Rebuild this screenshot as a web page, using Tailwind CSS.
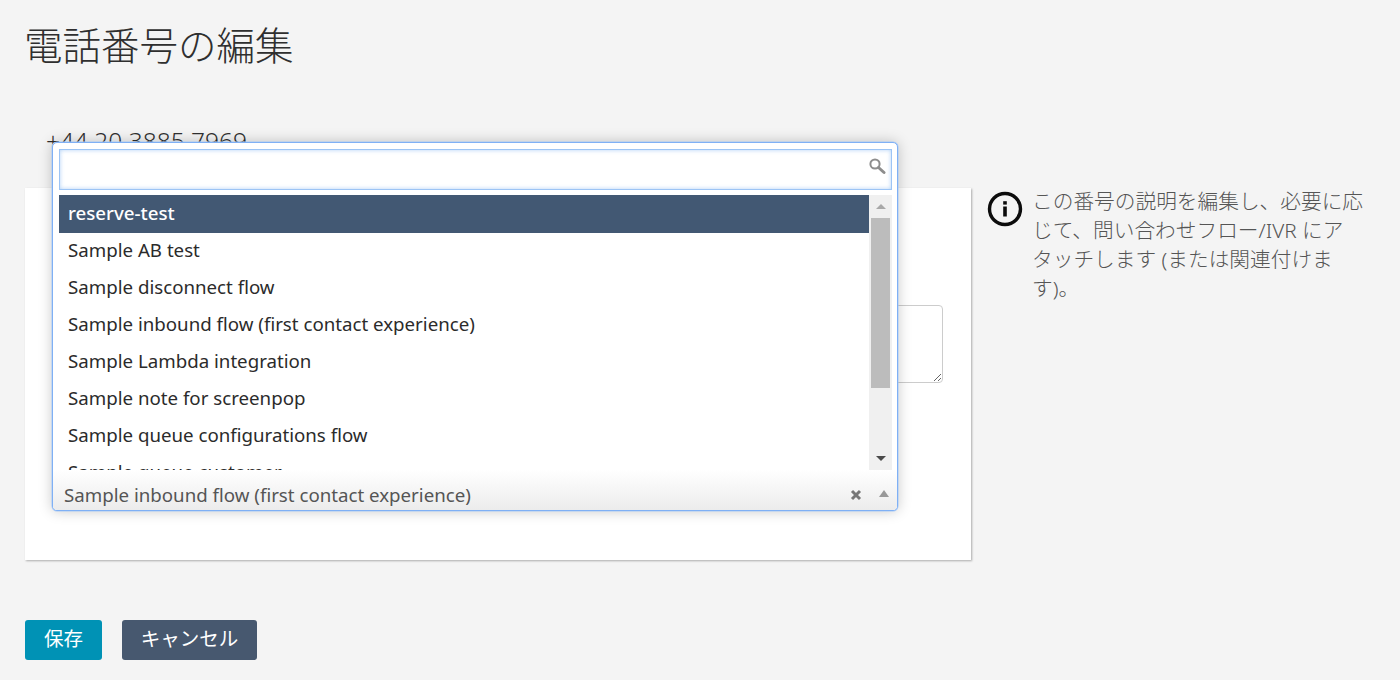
<!DOCTYPE html>
<html lang="ja">

<head>
    <meta charset="UTF-8">
    <title>電話番号の編集</title>
    <script src="https://cdn.jsdelivr.net/npm/@tailwindcss/browser@4"></script>
</head>

<body class="bg-[#f4f4f4] text-[#333] h-[680px] overflow-hidden font-['Noto_Sans','Noto_Sans_CJK_JP',sans-serif]">

    <div class="px-[25px]">
        <h1 class="pt-[18px] -ml-[1px] h-[112px] text-[38.5px] leading-[54px] font-light text-[#2f2f2f]">電話番号の編集</h1>

        <div class="h-[76px] pl-[21px] pt-[13px] text-[24.5px] leading-[32px] text-[#2f2f2f] font-light">+44 20 3885 7969</div>

        <div class="flex items-start">
            <!-- Card -->
            <div class="relative w-[946px] h-[372px] bg-white shadow-[1px_1px_2px_rgba(0,0,0,0.3)]">
                <textarea class="absolute left-[600px] top-[117px] w-[318px] h-[78px] border border-[#ccc] rounded-[4px] bg-white"></textarea>

                <!-- Dropdown -->
                <div class="absolute left-[27px] top-[-46px] w-[846px] h-[369px] bg-white border border-[#7fb0f5] rounded-[5px] shadow-[0_0_0_0.5px_#a9cbf8,0_0_14px_rgba(0,0,0,0.22)] flex flex-col pl-[6px] pr-[5px] pt-[6px]">
                    <div class="relative shrink-0 h-[41px] border border-[#9cc4f5] bg-white shadow-[inset_0_0_4px_rgba(110,170,240,0.55)]">
                        <svg class="absolute right-[5px] top-[7px] w-[18px] h-[18px]" viewBox="0 0 18 18" fill="none" stroke="#8d8d8d">
                            <circle cx="7" cy="7" r="4.6" stroke-width="2" />
                            <path d="M10.5 10.5L16 15.5" stroke-width="3" stroke-linecap="round" />
                        </svg>
                    </div>

                    <div class="flex mt-[5px] h-[275px] shrink-0 overflow-hidden">
                        <ul class="flex-1 text-[18.7px] leading-[33px] text-[#2b2b2b] overflow-hidden">
                            <li class="h-[38px] pl-[9px] leading-[35px] bg-[#425873] text-white font-medium">reserve-test</li>
                            <li class="h-[37px] pl-[9px]">Sample AB test</li>
                            <li class="h-[37px] pl-[9px]">Sample disconnect flow</li>
                            <li class="h-[37px] pl-[9px]">Sample inbound flow (first contact experience)</li>
                            <li class="h-[37px] pl-[9px]">Sample Lambda integration</li>
                            <li class="h-[37px] pl-[9px]">Sample note for screenpop</li>
                            <li class="h-[37px] pl-[9px]">Sample queue configurations flow</li>
                            <li class="h-[37px] pl-[9px]">Sample queue customer</li>
                        </ul>
                        <!-- Scrollbar -->
                        <div class="w-[23px] bg-[#f0f0f0] flex flex-col items-center px-[2px]">
                            <div class="h-[23px] flex items-center justify-center">
                                <div class="w-0 h-0 border-x-[5px] border-x-transparent border-b-[5px] border-b-[#a8a8a8]"></div>
                            </div>
                            <div class="w-[19px] h-[170px] bg-[#bcbcbc]"></div>
                            <div class="flex-1"></div>
                            <div class="h-[23px] flex items-center justify-center pb-[1px]">
                                <div class="w-0 h-0 border-x-[5px] border-x-transparent border-t-[5px] border-t-[#4a4a4a]"></div>
                            </div>
                        </div>
                    </div>

                    <!-- Selected value -->
                    <div class="relative flex-1 ml-[-6px] mr-[-5px] pt-[10px] bg-gradient-to-b from-white to-[#ececec] rounded-b-[4px] flex items-center pl-[11px] pr-[7px] text-[18.7px] text-[#555]">
                        <span class="flex-1">Sample inbound flow (first contact experience)</span>
                        <svg class="w-[12px] h-[12px] mr-[17px]" viewBox="0 0 12 12" stroke="#777" stroke-width="3">
                            <path d="M2 2L10 10M10 2L2 10" />
                        </svg>
                        <div class="w-0 h-0 mb-[4px] mr-[1px] border-x-[5px] border-x-transparent border-b-[7px] border-b-[#999]"></div>
                    </div>
                </div>
            </div>

            <!-- Help text -->
            <div class="flex ml-[16px] w-[380px]">
                <svg class="shrink-0 w-[36px] h-[36px] mt-[3px]" viewBox="0 0 36 36" fill="none">
                    <circle cx="18" cy="18" r="15.5" stroke="#0c0c0c" stroke-width="3.4" />
                    <rect x="16.2" y="15.5" width="3.6" height="10" fill="#0c0c0c" />
                    <rect x="16.2" y="10.2" width="3.6" height="3.4" fill="#0c0c0c" />
                </svg>
                <p class="ml-[9px] -mt-[1px] w-[335px] text-[20.7px] leading-[29px] text-[#555] font-light">この番号の説明を編集し、必要に応<br>じて、問い合わせフロー/IVR にア<br>タッチします (または関連付けま<br>す)。</p>
            </div>
        </div>

        <div class="flex gap-[20px] mt-[60px]">
            <button class="w-[77px] h-[40px] rounded-[3px] bg-[#0092b5] text-white text-[19.5px] leading-[36px] pb-[2px]">保存</button>
            <button class="w-[135px] h-[40px] rounded-[3px] bg-[#47586f] text-white text-[19.5px] leading-[36px] pb-[2px]">キャンセル</button>
        </div>
    </div>

</body>

</html>
